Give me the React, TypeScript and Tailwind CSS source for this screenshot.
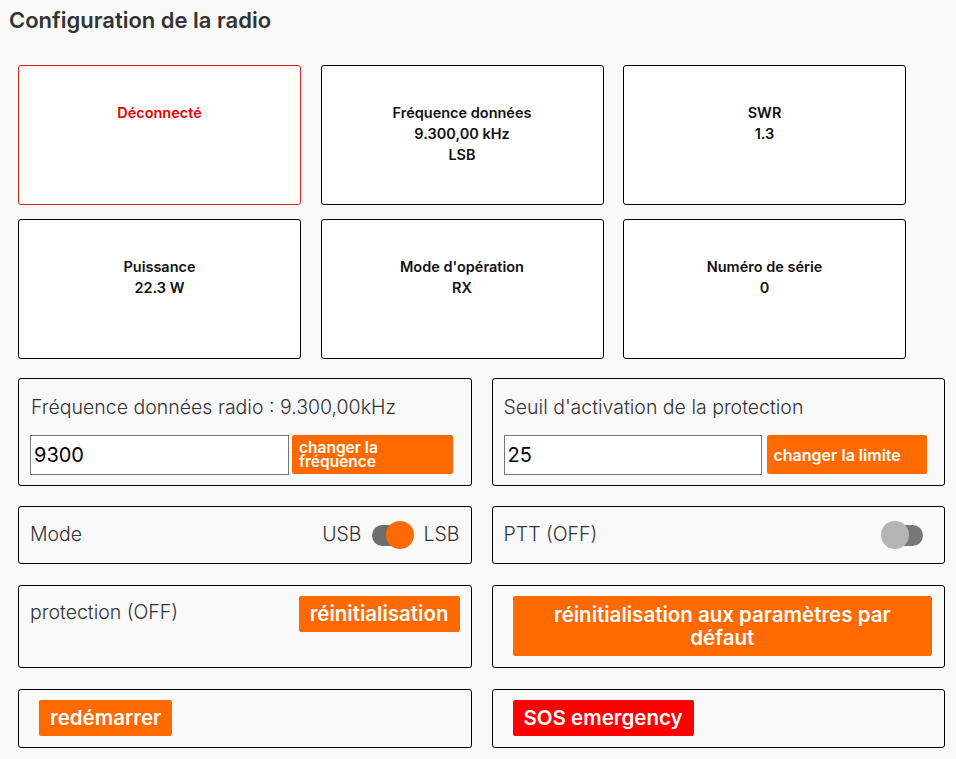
import * as React from 'react';
import {useState} from 'react';

const FONT = 'font-["Inter","Noto_Sans",sans-serif]';

interface InfoCardProps {
    lines: string[];
    danger?: boolean;
}

function InfoCard({lines, danger}: InfoCardProps) {
    return (
        <div
            className={`h-[140px] bg-white rounded-[3px] border pt-[36px] text-center text-[14.5px] leading-[21px] font-semibold ${
                danger ? 'border-[#e02020] text-[#e60000]' : 'border-black text-[#111]'
            }`}
        >
            {lines.map((l, i) => <div key={i}>{l}</div>)}
        </div>
    );
}

function Toggle({on}: {on: boolean}) {
    return (
        <div className="relative w-[42px] h-[28px] flex items-center">
            <div className={`w-[40px] h-[21px] rounded-full ${on ? 'bg-[#6e6e6e] ml-0' : 'bg-[#777] ml-[2px]'}`} />
            <div
                className={`absolute top-0 w-[28px] h-[28px] rounded-full ${on ? 'right-0 bg-[#ff6a00]' : 'left-0 bg-[#b5b5b5]'}`}
            />
        </div>
    );
}

const panel = 'rounded-[3px] border border-black';
const orangeBtn = 'h-[36px] px-[11px] bg-[#ff6a00] rounded-[2px] text-white text-[20.5px] font-semibold';

export default function App() {
    const [freq, setFreq] = useState('9300');
    const [limit, setLimit] = useState('25');

    return (
        <div className={`min-h-[759px] bg-[#f9f9f9] ${FONT} text-[#333]`}>
            <h1 className="px-[9px] pt-[5px] text-[22px] leading-[30px] font-semibold text-[#333]">Configuration de la radio</h1>

            <div className="pl-[18px] pt-[30px]">
                <div className="grid grid-cols-[283px_283px_283px] gap-x-[19.5px] gap-y-[14px]">
                    <InfoCard danger lines={['Déconnecté']} />
                    <InfoCard lines={['Fréquence données', '9.300,00 kHz', 'LSB']} />
                    <InfoCard lines={['SWR', '1.3']} />
                    <InfoCard lines={['Puissance', '22.3 W']} />
                    <InfoCard lines={["Mode d'opération", 'RX']} />
                    <InfoCard lines={['Numéro de série', '0']} />
                </div>

                <div className="w-[927px] text-[19.5px] font-light text-[#333]">
                    {/* frequency / threshold */}
                    <div className="mt-[19px] grid grid-cols-2 gap-x-[20px]">
                        <div className={`h-[108px] ${panel} px-[11px] pt-[14px]`}>
                            <div className="leading-[28px] pl-[1px]">Fréquence données radio : 9.300,00kHz</div>
                            <div className="mt-[14px] flex gap-[3px]">
                                <input
                                    value={freq}
                                    onChange={e => setFreq(e.target.value)}
                                    className="w-[259px] h-[40px] bg-white border border-[#767676] px-[3px] text-[20px] font-normal text-black outline-none"
                                />
                                <button className="w-[161px] h-[39px] bg-[#ff6a00] rounded-[2px] text-white text-[15.5px] leading-[14px] font-semibold text-left px-[7px]">
                                    changer la fréquence
                                </button>
                            </div>
                        </div>
                        <div className={`h-[108px] ${panel} px-[11px] pt-[14px]`}>
                            <div className="leading-[28px]">Seuil d'activation de la protection</div>
                            <div className="mt-[14px] flex gap-[5px]">
                                <input
                                    value={limit}
                                    onChange={e => setLimit(e.target.value)}
                                    className="w-[258px] h-[40px] bg-white border border-[#767676] px-[3px] text-[20px] font-normal text-black outline-none"
                                />
                                <button className="w-[160px] h-[39px] bg-[#ff6a00] rounded-[2px] text-white text-[16px] leading-[14px] font-semibold text-left px-[7px]">
                                    changer la limite
                                </button>
                            </div>
                        </div>
                    </div>

                    {/* mode / ptt */}
                    <div className="mt-[20px] grid grid-cols-2 gap-x-[20px]">
                        <div className={`h-[58px] ${panel} px-[11px] flex items-center justify-between`}>
                            <span>Mode</span>
                            <div className="flex items-center gap-[10px]">
                                <span>USB</span>
                                <Toggle on />
                                <span>LSB</span>
                            </div>
                        </div>
                        <div className={`h-[58px] ${panel} pl-[11px] pr-[21px] flex items-center justify-between`}>
                            <span>PTT (OFF)</span>
                            <Toggle on={false} />
                        </div>
                    </div>

                    {/* protection / defaults */}
                    <div className="mt-[21px] grid grid-cols-2 gap-x-[20px]">
                        <div className={`h-[83px] ${panel} px-[11px] pt-[10px] flex items-start justify-between`}>
                            <span className="leading-[32px]">protection (OFF)</span>
                            <button className={orangeBtn}>réinitialisation</button>
                        </div>
                        <div className={`h-[83px] ${panel} pl-[20px] pr-[12px] pt-[10px]`}>
                            <button className="w-full h-[60px] bg-[#ff6a00] rounded-[2px] text-white text-[20.5px] leading-[23px] font-semibold px-[30px]">
                                réinitialisation aux paramètres par défaut
                            </button>
                        </div>
                    </div>

                    {/* restart / sos */}
                    <div className="mt-[21px] grid grid-cols-2 gap-x-[20px]">
                        <div className={`h-[59px] ${panel} pl-[20px] pt-[10px]`}>
                            <button className={orangeBtn}>redémarrer</button>
                        </div>
                        <div className={`h-[59px] ${panel} pl-[20px] pt-[10px]`}>
                            <button className="h-[36px] px-[11px] bg-[#ff0000] rounded-[2px] text-white text-[20.5px] font-semibold">
                                SOS emergency
                            </button>
                        </div>
                    </div>
                </div>
            </div>
        </div>
    );
}
